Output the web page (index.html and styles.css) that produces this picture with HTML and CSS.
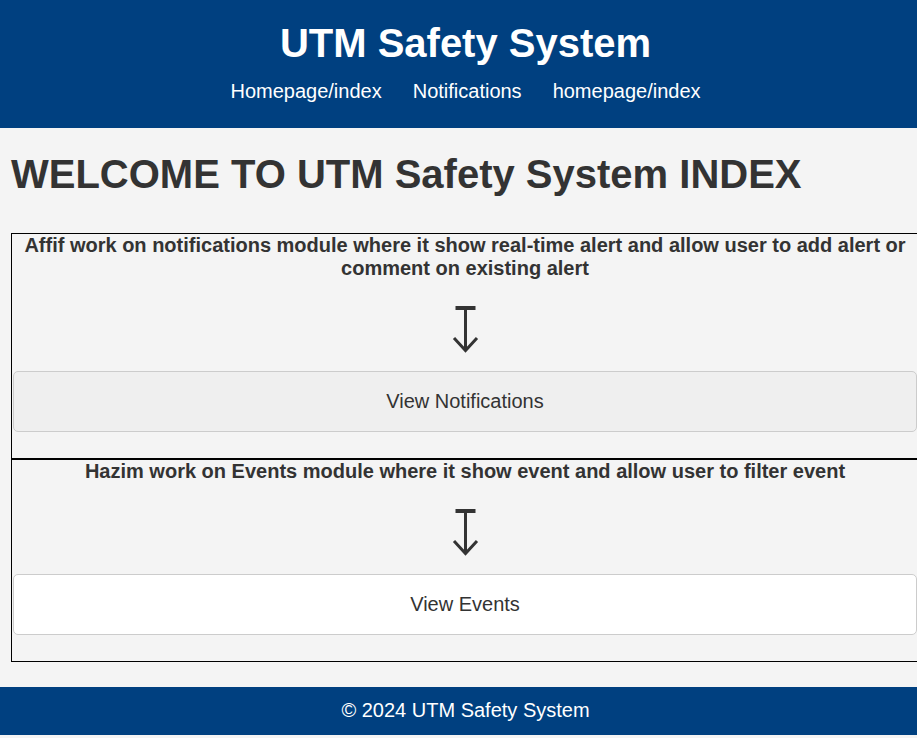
FILE: index.html
```html
<!DOCTYPE html>
<html lang="en">
<head>
<meta charset="utf-8">
<title>UTM Safety System</title>
<link rel="stylesheet" href="styles.css">
</head>
<body>
<header class="site-header">
  <h1 class="site-title">UTM Safety System</h1>
  <nav class="site-nav">
    <a href="#">Homepage/index</a>
    <a href="#">Notifications</a>
    <a href="#">homepage/index</a>
  </nav>
</header>
<main class="main">
  <h1 class="page-title">WELCOME TO UTM Safety System INDEX</h1>
  <section class="module">
    <h3 class="module-text">Affif work on notifications module where it show real-time alert and allow user to add alert or comment on existing alert</h3>
    <svg class="arrow" width="48" height="48" viewBox="0 0 48 48" aria-hidden="true">
      <path d="M14.5 3 H34.5" stroke="#333" stroke-width="4" fill="none"/>
      <path d="M24.5 3 V46" stroke="#333" stroke-width="3" fill="none"/>
      <path d="M13 33 L24.5 45.5 L36 33" stroke="#333" stroke-width="3" fill="none"/>
    </svg>
    <a href="#" class="btn btn-grey">View Notifications</a>
  </section>
  <section class="module">
    <h3 class="module-text">Hazim work on Events module where it show event and allow user to filter event</h3>
    <svg class="arrow" width="48" height="48" viewBox="0 0 48 48" aria-hidden="true">
      <path d="M14.5 3 H34.5" stroke="#333" stroke-width="4" fill="none"/>
      <path d="M24.5 3 V46" stroke="#333" stroke-width="3" fill="none"/>
      <path d="M13 33 L24.5 45.5 L36 33" stroke="#333" stroke-width="3" fill="none"/>
    </svg>
    <a href="#" class="btn btn-white">View Events</a>
  </section>
</main>
<footer class="site-footer">&copy; 2024 UTM Safety System</footer>
</body>
</html>
```

FILE: styles.css
```css
html, body {
  margin: 0;
  padding: 0;
}
body {
  background: #f4f4f4;
  color: #333;
  font-family: "Liberation Sans", Arial, sans-serif;
  overflow-x: hidden;
}
.site-header {
  background: #004080;
  color: #fff;
  text-align: center;
  padding: 20px 0 25px;
  margin-right: -14px;
}
.site-title {
  margin: 0 0 14px;
  font-size: 40px;
  line-height: 46px;
  font-weight: bold;
}
.site-nav {
  display: flex;
  justify-content: center;
  gap: 31px;
}
.site-nav a {
  color: #fff;
  text-decoration: none;
  font-size: 20px;
  line-height: 23px;
}
.main {
  padding: 0 0 0 11px;
}
.page-title {
  margin: 23px 0 36px;
  font-size: 40px;
  line-height: 46px;
  font-weight: bold;
  color: #333;
}
.module {
  border: 1px solid #000;
  padding: 0 1px 26px;
  margin-right: -2px;
  text-align: center;
  display: flex;
  flex-direction: column;
}
.module-text {
  margin: 0;
  font-size: 20px;
  line-height: 23px;
  font-weight: bold;
  color: #333;
}
.arrow {
  display: block;
  margin: 25px auto 18px;
}
.btn {
  display: block;
  padding: 18px 0;
  font-size: 20px;
  line-height: 23px;
  color: #333;
  text-decoration: none;
  border: 1px solid #ccc;
  border-radius: 5px;
}
.btn-grey {
  background: #efefef;
}
.btn-white {
  background: #fff;
}
.site-footer {
  margin-top: 25px;
  margin-right: -14px;
  background: #004080;
  color: #fff;
  text-align: center;
  font-size: 20px;
  line-height: 23px;
  padding: 12px 0 13px;
}
```
